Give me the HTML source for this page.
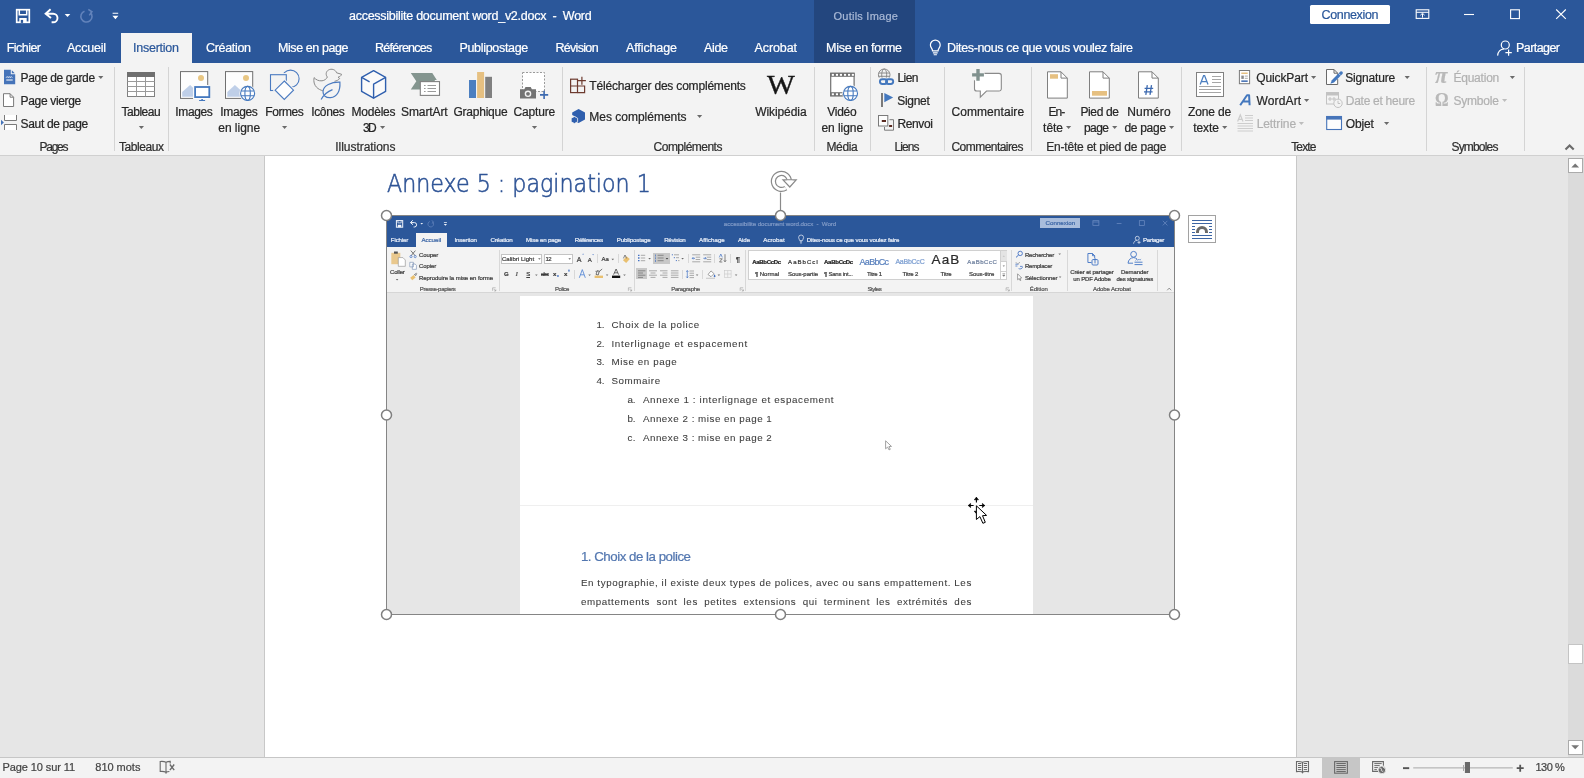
<!DOCTYPE html>
<html lang="fr">
<head>
<meta charset="utf-8">
<title>accessibilite document word_v2.docx - Word</title>
<style>
html,body{margin:0;padding:0;}
body{width:1584px;height:778px;overflow:hidden;position:relative;background:#e6e6e6;font-family:"Liberation Sans",sans-serif;}
.t{position:absolute;white-space:pre;line-height:1;z-index:5;-webkit-text-stroke:0.22px;}
.abs{position:absolute;}
#labels{position:absolute;left:0;top:0;width:1584px;height:778px;z-index:5;will-change:transform;}
#titlebar{position:absolute;left:0;top:0;width:1584px;height:63px;background:#2b579a;}
#ctx{position:absolute;left:814px;top:0;width:101px;height:63px;background:#23467e;}
#tab-active{position:absolute;left:121px;top:33px;width:71px;height:30px;background:#f3f3f3;}
#connexion{position:absolute;left:1310px;top:5px;width:80px;height:19px;background:#fff;border-radius:1.500px;}
#ribbon{position:absolute;left:0;top:63px;width:1584px;height:92px;background:#f3f3f3;border-bottom:1px solid #d0d0d0;}
.sep{position:absolute;top:67px;width:1px;height:84px;background:#d4d4d4;}
#doc{position:absolute;left:0;top:156px;width:1584px;height:601px;background:#e6e6e6;}
#page{position:absolute;left:264px;top:156px;width:1031px;height:601px;background:#fff;border-left:1px solid #c8c8c8;border-right:1px solid #c8c8c8;}
#vscroll{position:absolute;left:1568px;top:158px;width:16px;height:599px;background:#dbdbdb;}
.sbtn{position:absolute;left:0;width:13px;height:13px;background:#fff;border:1px solid #ababab;box-sizing:content-box;}
#status{position:absolute;left:0;top:757px;width:1584px;height:21px;background:#f3f3f3;border-top:1px solid #c6c6c6;box-sizing:border-box;}
#icons{position:absolute;left:0;top:0;z-index:4;}
#pic{position:absolute;left:387px;top:216px;width:787px;height:398px;overflow:hidden;background:#e6e6e6;}
#picframe{position:absolute;left:386px;top:215px;width:787px;height:398px;border:1px solid #858585;box-sizing:content-box;z-index:6;pointer-events:none;}
.h{position:absolute;width:8.6px;height:8.6px;border:1.5px solid #808080;border-radius:50%;background:#fff;z-index:7;}
</style>
</head>
<body>
<div id="titlebar"><div id="ctx"></div><div id="tab-active"></div><div id="connexion"></div></div>
<div id="ribbon"></div>
<div class="sep" style="left:114px"></div>
<div class="sep" style="left:168px"></div>
<div class="sep" style="left:562px"></div>
<div class="sep" style="left:814px"></div>
<div class="sep" style="left:870px"></div>
<div class="sep" style="left:944px"></div>
<div class="sep" style="left:1031px"></div>
<div class="sep" style="left:1181px"></div>
<div class="sep" style="left:1426px"></div>
<div class="sep" style="left:1524px"></div>
<div id="doc"></div>
<div id="page"></div>
<div id="vscroll">
  <div class="sbtn" style="top:0"></div>
  <div class="sbtn" style="top:486px;height:17.5px;border-color:#c4c4c4"></div>
  <div class="sbtn" style="top:582px"></div>
</div>
<div id="status"><div class="abs" style="left:1322px;top:0;width:38px;height:20px;background:#c6c6c6"></div></div>
<div id="pic">
<div class="abs" style="left:0.0px;top:0.0px;width:787.0px;height:31.3px;background:#2b579a;"></div>
<div class="abs" style="left:28.6px;top:16.8px;width:31.6px;height:14.7px;background:#f3f3f3;"></div>
<div class="abs" style="left:0.0px;top:31.3px;width:787.0px;height:45.1px;background:#f3f3f3;"></div>
<div class="abs" style="left:0.0px;top:76.4px;width:787.0px;height:0.8px;background:#d6d6d6;"></div>
<div class="abs" style="left:133.0px;top:79.6px;width:513.0px;height:318.4px;background:#ffffff;"></div>
<div class="abs" style="left:133.0px;top:289.3px;width:513.0px;height:0.9px;background:#efefef;"></div>
<div class="abs" style="left:653.2px;top:2.4px;width:39.6px;height:9.5px;background:#a9bddc;"></div>
<div class="abs" style="left:111.5px;top:33.5px;width:0.6px;height:41.5px;background:#d8d8d8;"></div>
<div class="abs" style="left:247.3px;top:33.5px;width:0.6px;height:41.5px;background:#d8d8d8;"></div>
<div class="abs" style="left:358.4px;top:33.5px;width:0.6px;height:41.5px;background:#d8d8d8;"></div>
<div class="abs" style="left:624.2px;top:33.5px;width:0.6px;height:41.5px;background:#d8d8d8;"></div>
<div class="abs" style="left:680.0px;top:33.5px;width:0.6px;height:41.5px;background:#d8d8d8;"></div>
<div class="abs" style="left:770.2px;top:33.5px;width:0.6px;height:41.5px;background:#d8d8d8;"></div>
<div class="abs" style="left:209.9px;top:38.0px;width:0.6px;height:9.0px;background:#d8d8d8;"></div>
<div class="abs" style="left:231.2px;top:38.0px;width:0.6px;height:9.0px;background:#d8d8d8;"></div>
<div class="abs" style="left:187.3px;top:54.0px;width:0.6px;height:9.0px;background:#d8d8d8;"></div>
<div class="abs" style="left:301.2px;top:38.0px;width:0.6px;height:9.0px;background:#d8d8d8;"></div>
<div class="abs" style="left:327.0px;top:38.0px;width:0.6px;height:9.0px;background:#d8d8d8;"></div>
<div class="abs" style="left:343.0px;top:38.0px;width:0.6px;height:9.0px;background:#d8d8d8;"></div>
<div class="abs" style="left:294.5px;top:54.0px;width:0.6px;height:9.0px;background:#d8d8d8;"></div>
<div class="abs" style="left:315.2px;top:54.0px;width:0.6px;height:9.0px;background:#d8d8d8;"></div>
<div class="abs" style="left:114.1px;top:37.5px;width:41.0px;height:10.5px;background:#fff;border:0.6px solid #c4c4c4;box-sizing:border-box;"></div>
<div class="abs" style="left:156.5px;top:37.5px;width:29.7px;height:10.5px;background:#fff;border:0.6px solid #c4c4c4;box-sizing:border-box;"></div>
<div class="abs" style="left:266.2px;top:37.0px;width:16.8px;height:11.0px;background:#c8c8c8;"></div>
<div class="abs" style="left:249.3px;top:52.3px;width:10.7px;height:11.0px;background:#c8c8c8;"></div>
<div class="abs" style="left:361.3px;top:34.4px;width:259.2px;height:29.8px;background:#fff;border:0.6px solid #d0d0d0;box-sizing:border-box;"></div>
<div class="abs" style="left:613.4px;top:34.8px;width:6.8px;height:10.6px;background:#e4e4e4;"></div>
<div class="abs" style="left:613.4px;top:45.4px;width:6.8px;height:0.5px;background:#d0d0d0;"></div>
<div class="abs" style="left:613.4px;top:54.5px;width:6.8px;height:0.5px;background:#d0d0d0;"></div>
<div class="abs" style="left:613.1px;top:34.8px;width:0.5px;height:29.2px;background:#d0d0d0;"></div>
<!--PICICONS-->
</div>
<div id="picframe"></div>
<svg class="abs" style="left:0;top:0;z-index:7" width="1584" height="778" viewBox="0 0 1584 778"><circle cx="386.5" cy="215.5" r="5" fill="#fff" stroke="#7f7f7f" stroke-width="1.500"/><circle cx="780.5" cy="215.5" r="5" fill="#fff" stroke="#7f7f7f" stroke-width="1.500"/><circle cx="1174.5" cy="215.5" r="5" fill="#fff" stroke="#7f7f7f" stroke-width="1.500"/><circle cx="386.5" cy="415" r="5" fill="#fff" stroke="#7f7f7f" stroke-width="1.500"/><circle cx="1174.5" cy="415" r="5" fill="#fff" stroke="#7f7f7f" stroke-width="1.500"/><circle cx="386.5" cy="614.5" r="5" fill="#fff" stroke="#7f7f7f" stroke-width="1.500"/><circle cx="780.5" cy="614.5" r="5" fill="#fff" stroke="#7f7f7f" stroke-width="1.500"/><circle cx="1174.5" cy="614.5" r="5" fill="#fff" stroke="#7f7f7f" stroke-width="1.500"/></svg>
<svg id="icons" width="1584" height="778" viewBox="0 0 1584 778" fill="none">
<!-- ===== title bar ===== -->
<g stroke="#fff" fill="none">
  <!-- save -->
  <rect x="16.700" y="9.700" width="12.600" height="12.600" stroke-width="1.700"/>
  <path d="M19.300 9.700v5h7.400v-5" stroke-width="1.500"/>
  <rect x="19.300" y="18" width="7.400" height="4.600" fill="#fff" stroke="none"/>
  <rect x="20.800" y="19.900" width="2.300" height="3" fill="#2b579a" stroke="none"/>
  <!-- undo -->
  <path d="M50.6 9.2l-5 4.6 5.4 4.3M46 13.7h7.2a4.3 4.3 0 0 1 0 8.6h-1.6" stroke-width="1.9" stroke-linejoin="miter"/>
  <!-- redo dim -->
  <path d="M84.5 11.2a5.6 5.6 0 1 0 5.8 1.2M88.3 9.4l3.6 2.4-2.6 3.6" stroke="#6283bb" stroke-width="1.6"/>
  <!-- window controls -->
  <rect x="1416.2" y="9.8" width="12.6" height="8.6" stroke-width="1.1"/>
  <path d="M1416.2 12.3h12.6M1422.5 17.6v-4M1420.4 15.2l2.1-2 2.1 2" stroke-width="1"/>
  <path d="M1464 14.5h10" stroke-width="1.1"/>
  <rect x="1510.6" y="9.8" width="8.8" height="8.8" stroke-width="1.1"/>
  <path d="M1556.2 9.5l9.6 9.4M1565.8 9.5l-9.6 9.4" stroke-width="1.1"/>
  <!-- bulb -->
  <path d="M932.5 50.800c0-2.200-2.100-3.200-2.100-5.800a4.900 4.900 0 0 1 9.800 0c0 2.600-2.100 3.600-2.100 5.800z" stroke-width="1.200"/>
  <path d="M932.900 52.900h4.800M933.700 54.800h3.200" stroke-width="1.100"/>
  <!-- share -->
  <circle cx="1505.3" cy="45" r="4" stroke-width="1.2"/>
  <path d="M1497.6 55.6c.4-4 3-6.4 6.4-6.6" stroke-width="1.2"/>
  <path d="M1508.6 49.4v6.4M1505.4 52.6h6.4" stroke-width="1.2"/>
</g>
<path d="M64.7 13.9h5.6l-2.8 3.2z" fill="#fff"/>
<path d="M112.6 12.7h5.6v1.1h-5.6zM112.4 15.7h6l-3 3.5z" fill="#fff"/>

<!-- ===== dropdown arrows ===== -->
<g fill="#6a6a6a">
<path d="M98.2 76h5.2l-2.6 3z"/><path d="M138.8 126h5.2l-2.6 3z"/><path d="M282 126h5.2l-2.6 3z"/><path d="M380 126h5.2l-2.6 3z"/>
<path d="M531.9 126h5.2l-2.6 3z"/><path d="M697 115.1h5.2l-2.6 3z"/><path d="M1066 126h5.2l-2.6 3z"/><path d="M1112.1 126h5.2l-2.6 3z"/>
<path d="M1169 126h5.2l-2.6 3z"/><path d="M1222.1 126h5.2l-2.6 3z"/><path d="M1311 76h5.2l-2.6 3z"/><path d="M1304 99h5.2l-2.6 3z"/>
<path d="M1404.6 76h5.2l-2.6 3z"/><path d="M1384 122h5.2l-2.6 3z"/><path d="M1509.8 76h5.2l-2.6 3z"/>
</g>
<g fill="#bdbdbd"><path d="M1298.8 122h5.2l-2.6 3z"/><path d="M1502 99h5.2l-2.6 3z"/></g>
<!-- collapse chevron -->
<path d="M1565.500 149.600l4.100-4.100 4.100 4.100" stroke="#6a6a6a" stroke-width="2.100"/>

<!-- ===== Pages group ===== -->
<!-- page de garde -->
<path d="M4 69.800h6.800v4.400h4.400v10h-11.200z" fill="#4674b9"/>
<path d="M11.800 70.200l3 3h-3z" fill="#4674b9"/>
<path d="M6.2 77.6l1-1 1 1 1-1 1 1 1-1 1 1M6.3 80h6.4" stroke="#fff" stroke-width="1"/>
<!-- page vierge -->
<path d="M3.5 93.7h6.6l3.5 3.5v9.3h-10.1z" fill="#fff" stroke="#7a7a7a" stroke-width="1"/>
<path d="M10.1 93.7v3.5h3.5" stroke="#7a7a7a" stroke-width="1"/>
<!-- saut de page -->
<path d="M4.5 115v5.5h12v-5.5M4.5 130v-5.5h12v5.5" stroke="#7a7a7a" stroke-width="1" fill="#fff"/>
<path d="M1 119.800l2.900 2.700-2.900 2.700z" fill="#4674b9"/>
<!-- tableau -->
<rect x="127.5" y="72.5" width="27" height="24" fill="#fff" stroke="#808080" stroke-width="1"/>
<rect x="127" y="72" width="28" height="5" fill="#6f6f6f"/>
<path d="M127.5 81.500h27M127.5 86.500h27M127.5 91.500h27M136.5 77v19.5M145.5 77v19.5" stroke="#9a9a9a" stroke-width="1"/>

<!-- ===== Illustrations ===== -->
<!-- images -->
<rect x="180.500" y="71.600" width="27.200" height="26.800" fill="#fdfdfd" stroke="#707070" stroke-width="1"/>
<circle cx="201" cy="77.900" r="3" fill="#e8c683"/>
<path d="M182.200 96.700v-4.600l7.900-7.100 6 5.400v6.300z" fill="#bfcfe8"/>
<rect x="193.200" y="85.100" width="18" height="17" fill="#f3f3f3"/>
<rect x="193.200" y="85.100" width="15" height="13.800" fill="#fdfdfd"/>
<rect x="195.100" y="87" width="14.200" height="10.100" fill="#fff" stroke="#4478be" stroke-width="1.800"/>
<path d="M199.100 100.500h6M201.300 99.600h1.600" stroke="#4478be" stroke-width="1.100"/>
<!-- images en ligne -->
<rect x="225.500" y="71.600" width="27.200" height="26.800" fill="#fdfdfd" stroke="#707070" stroke-width="1"/>
<circle cx="246" cy="77.900" r="3" fill="#e8c683"/>
<path d="M227.300 96.700v-4.600l7.600-7.100 8 7.200v4.500z" fill="#bfcfe8"/>
<circle cx="247.6" cy="93.4" r="8.300" fill="#f3f3f3"/>
<g stroke="#4478be" stroke-width="1.100">
<circle cx="247.6" cy="93.4" r="7" fill="#fff"/>
<ellipse cx="247.6" cy="93.4" rx="2.700" ry="7"/>
<path d="M241.0 91.0h13.200M241.0 95.8h13.200"/>
</g>
<!-- formes -->
<g stroke="#f3f3f3" stroke-width="3.200" fill="#f3f3f3">
<circle cx="290.500" cy="78.700" r="8.600"/>
</g>
<circle cx="290.500" cy="78.700" r="8.600" stroke="#4a7ac0" stroke-width="1.100" fill="#f3f3f3"/>
<rect x="270.500" y="74.700" width="15.800" height="15.800" fill="#f3f3f3" stroke="#f3f3f3" stroke-width="3.200"/>
<rect x="270.500" y="74.700" width="15.800" height="15.800" fill="#f3f3f3" stroke="#4a7ac0" stroke-width="1.100"/>
<path d="M284.300 81l9.200 9.200-9.200 9.200-9.200-9.200z" fill="#f3f3f3" stroke="#f3f3f3" stroke-width="3.200"/>
<path d="M284.300 81l9.200 9.200-9.200 9.200-9.200-9.200z" fill="#fdfdfd" stroke="#4a7ac0" stroke-width="1.100"/>
<!-- icones (duck + leaf) -->
<path d="M327.400 77C325.500 75 325.800 71.500 328.500 70C331.500 68.300 335.500 69.500 336.600 72.800L341.600 74.300C341 76 339.500 77 338 77.200L339.600 78.600C338.600 80 336.500 81 334.500 81.300M327.400 77C326.500 79 324.500 80.500 322 80.800C318.800 81.200 316 79.800 314.100 77.600C313.300 81.500 314.300 85 316.600 87.300C318.300 89 320.500 90.200 322.800 90.700" stroke="#8a8a8a" stroke-width="1"/>
<path d="M339.900 82.200C331 82 323.500 85.500 323 91.500C322.800 95.500 326 98 330.500 97.600C337 97 340.500 91 339.900 82.200ZM321.100 99.500C323.500 95 327.500 91.500 332.500 89.600" stroke="#4a7ac0" stroke-width="1.200"/>
<!-- modeles 3D -->
<path d="M373.600 70.600l12 6.800v14l-12 6.800-12-6.800v-14z" fill="#fafafa" stroke="#2f5fae" stroke-width="1.400" stroke-linejoin="round"/><path d="M385.600 77.400l-12 6.800v14M369.600 81.900l-8-4.500" stroke="#2f5fae" stroke-width="1.400" stroke-linejoin="round"/>
<!-- smartart -->
<path d="M410.800 73h21.500l4.500 7-2 0v9.500h-24l5.500-8.200z" fill="#84958f"/>
<rect x="420.300" y="81.600" width="19.200" height="13.800" fill="#fff" stroke="#808080" stroke-width="1.100"/>
<path d="M424 85.500h1.600M424 88.500h1.600M424 91.500h1.600M427.500 85.500h8.500M427.500 88.500h8.500M427.500 91.500h8.500" stroke="#9a9a9a" stroke-width="1"/>
<!-- graphique -->
<rect x="469" y="80" width="7" height="18" fill="#4c7fc0"/>
<rect x="477.100" y="72" width="7" height="26" fill="#e6c081"/>
<rect x="485.200" y="76.800" width="6.800" height="21.200" fill="#808080"/>
<!-- capture -->
<rect x="522.500" y="72.500" width="22" height="19" fill="#fff" stroke="#9a9a9a" stroke-width="1" stroke-dasharray="2 1.500"/>
<path d="M520 89.200h4.300l1.200-2.200h5.200l1.200 2.200h4.100v9.400h-16z" fill="#737373"/>
<circle cx="528" cy="93.800" r="3.300" fill="#f3f3f3"/><circle cx="528" cy="93.800" r="1.900" fill="#737373"/>
<path d="M544.100 90.800v8.200M540 94.900h8.200" stroke="#3d6ab0" stroke-width="1.600"/>

<!-- ===== Complements ===== -->
<g stroke="#6d3b2f" stroke-width="1.200">
<rect x="570.600" y="79.200" width="6.900" height="13.400"/>
<path d="M570.600 86h14v6.600h-7.100M581.900 76.700v8M578 80.700h7.900"/>
</g>
<!-- mes complements -->
<path d="M578.600 109l6.400 3.400v7.200l-6.400 3.400-3-1.600v-4.600l-3.400-1.800v-2.600z" fill="#2f5fae"/>
<path d="M574.400 116.500l3.200 1.700v3.600l-3.200 1.700-3.200-1.700v-3.600z" fill="#2f5fae" stroke="#f3f3f3" stroke-width="0.800"/>
<!-- ===== media: video ===== -->
<rect x="830.700" y="73.300" width="23.400" height="22.500" fill="#fff" stroke="#707070" stroke-width="1.200"/>
<rect x="830.200" y="72.800" width="24.400" height="4" fill="#707070"/>
<rect x="830.200" y="92.200" width="24.400" height="4.100" fill="#707070"/>
<rect x="831.8" y="73.900" width="2.100" height="1.900" fill="#fff"/><rect x="835.9" y="73.900" width="2.100" height="1.900" fill="#fff"/><rect x="839.9" y="73.900" width="2.100" height="1.900" fill="#fff"/><rect x="844.0" y="73.900" width="2.100" height="1.900" fill="#fff"/><rect x="848.0" y="73.900" width="2.100" height="1.900" fill="#fff"/><rect x="851.8" y="73.900" width="2.100" height="1.900" fill="#fff"/><rect x="831.8" y="93.300" width="2.100" height="1.900" fill="#fff"/><rect x="835.9" y="93.300" width="2.100" height="1.900" fill="#fff"/><rect x="839.9" y="93.300" width="2.100" height="1.900" fill="#fff"/>
<circle cx="850.5" cy="93.4" r="8.300" fill="#f3f3f3"/>
<g stroke="#4478be" stroke-width="1.100">
<circle cx="850.5" cy="93.4" r="7" fill="#fff"/>
<ellipse cx="850.5" cy="93.4" rx="2.700" ry="7"/>
<path d="M843.9 91.0h13.200M843.9 95.8h13.200"/>
</g>
<!-- ===== liens ===== -->
<g stroke="#8a8a8a" stroke-width="1">
<circle cx="884.200" cy="74.800" r="5.800"/>
<ellipse cx="884.200" cy="74.800" rx="2.500" ry="5.800"/>
<path d="M878.800 73h10.800M878.800 76.300h10.800"/>
</g>
<rect x="877.400" y="77.600" width="18" height="8.400" fill="#f3f3f3"/>
<g stroke="#4478be" stroke-width="1.900">
<rect x="879.900" y="79.200" width="7.200" height="4.800" rx="2.400"/>
<rect x="886" y="79.200" width="7.200" height="4.800" rx="2.400"/>
</g>
<path d="M882 93v14" stroke="#7a7a7a" stroke-width="2"/>
<path d="M884.300 93l8.900 4.600-8.900 4.700z" fill="#4478be"/>
<rect x="878.500" y="115.500" width="9.300" height="10.500" fill="#fdfdfd" stroke="#7a7a7a" stroke-width="1"/>
<path d="M884.500 127v3.200h9v-10.500h-4" stroke="#7a7a7a" stroke-width="1"/>
<path d="M881.800 121h4.200M889.100 126h3" stroke="#5a2a20" stroke-width="1.900"/>
<!-- ===== commentaire ===== -->
<path d="M984.500 73.400h14.500a2.300 2.300 0 0 1 2.300 2.300v13a2.300 2.300 0 0 1-2.300 2.300h-12.500l-6.200 6.200v-6.200h-3.500a2.300 2.300 0 0 1-2.300-2.300v-8.500" fill="#fff" stroke="#8a8a8a" stroke-width="1.100"/>
<path d="M978 69v11.800M972.100 74.900h11.800" stroke="#80918e" stroke-width="3.400"/>
<!-- ===== header/footer/page number ===== -->
<g fill="#fff" stroke="#7f7f7f" stroke-width="1">
<path d="M1047.500 71.800h13.500l6.300 6.300v20h-19.800z"/><path d="M1061 71.800v6.300h6.300" fill="none"/>
<path d="M1089.500 71.800h13.500l6.300 6.300v20h-19.800z"/><path d="M1103 71.800v6.300h6.300" fill="none"/>
<path d="M1138.500 71.800h13.500l6.300 6.300v20h-19.800z"/><path d="M1152 71.800v6.300h6.300" fill="none"/>
</g>
<rect x="1050" y="74.200" width="8" height="4.500" fill="#e6c081"/>
<rect x="1092" y="91" width="15" height="4.700" fill="#e6c081"/>
<path d="M1147.300 85.200l-1.500 9.600M1151.500 85.200l-1.500 9.600M1144.600 88.300h8.600M1144 91.800h8.600" stroke="#3d6ab0" stroke-width="1.300"/>
<!-- ===== texte ===== -->
<rect x="1196.500" y="72.500" width="27" height="24" fill="#fff" stroke="#808080" stroke-width="1"/>
<path d="M1212 76.500h9M1212 79.500h9M1212 82.500h9M1199 86.500h22M1199 89.500h22M1199 92.500h22" stroke="#a6a6a6" stroke-width="1"/>
<path d="M1200.200 84.600l3.400-9h1l3.400 9M1201.500 81.600h5.200" stroke="#4c7fc0" stroke-width="1.300"/>
<!-- quickpart -->
<rect x="1239.400" y="70.500" width="10.200" height="13.200" fill="#fff" stroke="#7a7a7a" stroke-width="1"/>
<rect x="1241.300" y="72.500" width="6.400" height="1.500" fill="#e6c081"/>
<rect x="1241.300" y="75.600" width="2.500" height="3.300" fill="#8a8a8a"/>
<path d="M1244.800 76.100h3M1244.800 78.300h3" stroke="#a0a0a0" stroke-width="0.900"/>
<rect x="1241.300" y="80.400" width="6.400" height="1.500" fill="#3d6ab0"/>
<!-- wordart -->
<path d="M1240.200 105.200l6.800-10h2.100l.5 10M1242.800 101.500h6.400" stroke="#4478be" stroke-width="2" stroke-linejoin="round"/>
<!-- lettrine (disabled) -->
<g stroke="#cdcdcd" stroke-width="1">
<path d="M1237.600 121.500l2.700-6.600 2.700 6.600M1238.500 119.300h3.600" stroke-width="1.200"/>
<path d="M1245 115.500h8M1245 118h8M1245 120.500h8M1237.500 123.500h15.500M1237.500 126h15.500M1237.500 128.500h15.500M1237.500 131h15.500"/>
</g>
<!-- signature -->
<path d="M1334 69.500h-7.500v15h11.200v-5.400M1334 69.500l3.700 3.700v1.600M1334 69.500v3.700h3.700" stroke="#6a6a6a" stroke-width="1" fill="#fdfdfd"/>
<path d="M1340.400 71.600a1.600 1.600 0 0 1 2.200 2.200l-8.600 8.600-3.600 1.400 1.400-3.600z" fill="#4478be"/>
<path d="M1338.600 73.400l2.200 2.200" stroke="#f3f3f3" stroke-width="0.700"/>
<!-- date et heure (disabled) -->
<g stroke="#c2c2c2" stroke-width="1" fill="none">
<rect x="1326.500" y="93" width="12" height="11"/>
<rect x="1326.500" y="92.600" width="12" height="2.400" fill="#c2c2c2"/>
<path d="M1329 98h2v2h-2zM1333 98h2v2h-2z"/>
<circle cx="1338" cy="103.300" r="4.200" fill="#f3f3f3"/>
<path d="M1338 100.800v2.700h2.200"/>
</g>
<!-- objet -->
<rect x="1326.700" y="116.500" width="14.800" height="13" fill="#fdfdfd" stroke="#4674b9" stroke-width="1.100"/>
<rect x="1326.200" y="116" width="15.800" height="3.600" fill="#4674b9"/>
<!-- ===== symboles (disabled): text glyphs in labels ===== -->
<!-- ===== status bar ===== -->
<g stroke="#6a6a6a" stroke-width="1" fill="none">
<!-- proofing book -->
<path d="M166 772.200v-10c-1.700-.800-3.700-.900-5.800-.700v10c2.100-.200 4.100-.100 5.800.700zM166 762.200c1.300-.600 2.700-.800 4.200-.800v2M166 772.200c1.100-.500 2.200-.700 3.400-.700" stroke-width="1.100"/>
<path d="M166 772v1.800" stroke-width="1"/>
<path d="M169.900 764.500l4.300 5.600M174.200 764.500l-4.300 5.600" stroke-width="1.400"/>
<!-- read mode -->
<path d="M1302.500 762.200v9.600M1302.500 762.200c-1.800-.700-3.800-.700-6-.600v10c2.200-.100 4.200-.100 6 .200c1.800-.300 3.800-.300 6-.200v-10c-2.200-.100-4.200-.100-6 .600z" stroke-width="1.100"/>
<path d="M1298 763.500h3.300M1298 765.500h3.300M1298 767.500h3.300M1298 769.600h3.300M1303.800 763.500h3.300M1303.800 765.500h3.300M1303.800 767.500h3.300M1303.800 769.600h3.300" stroke-width="1"/>
<path d="M1301.200 771.800l1.300 2 1.300-2z" fill="#6a6a6a" stroke="none"/>
<!-- print layout -->
<rect x="1334.600" y="761.600" width="12.800" height="11.600" stroke-width="1.100"/>
<path d="M1336.400 763.500h9.400M1336.400 765.500h9.400M1336.400 767.500h9.400M1336.400 769.600h9.400M1336.400 771.500h9.400" stroke-width="1"/>
<!-- web layout -->
<path d="M1378 771.400h-5.400v-9.800h10.800v4.200" stroke-width="1.100"/>
<path d="M1374.300 763.600h7.400M1374.300 765.600h5.400M1374.300 767.600h3.600M1374.300 769.600h2.600" stroke-width="1"/>
<circle cx="1381.900" cy="769.900" r="3.800" fill="#6a6a6a" stroke="#f3f3f3" stroke-width="0.800"/>
<path d="M1379.600 768.400c1.400-.600 2.200.400 1.800 1.500s.900 1.800 1.900 1.100M1382.800 767c.600.700 1.500.600 2 1.300" stroke="#f3f3f3" stroke-width="0.900"/>
</g>
<!-- zoom slider -->
<rect x="1403" y="767.200" width="6.200" height="1.900" fill="#555"/>
<rect x="1413.200" y="767.400" width="99.600" height="1" fill="#a8a8a8"/>
<rect x="1463" y="765" width="1" height="6" fill="#a8a8a8"/>
<rect x="1464.900" y="762" width="5.100" height="11" fill="#6a6a6a"/>
<path d="M1516.700 768.200h7M1520.200 764.700v7" stroke="#555" stroke-width="1.800"/>
<!-- scrollbar arrows -->
<path d="M1571.300 167.500l3.900-3.900 3.900 3.900z" fill="#777"/>
<path d="M1571.300 745.300l3.900 3.900 3.900-3.900z" fill="#777"/>
<!-- ===== picture tools: rotate handle ===== -->
<path d="M780.500 192.500v18" stroke="#8a8a8a" stroke-width="1.200"/>
<path d="M789.400 181.200a8 8 0 1 0-3.600 6.900" stroke="#8a8a8a" stroke-width="5.200" />
<path d="M789.400 181.200a8 8 0 1 0-3.600 6.900" stroke="#fff" stroke-width="2.800" />
<path d="M783 179.800h13.200l-6.400 7.200z" fill="#fff" stroke="#8a8a8a" stroke-width="1.200" stroke-linejoin="miter"/>
<path d="M786.300 180.600h6.500l-3.200 3.300z" fill="#fff"/>
<!-- layout options button -->
<rect x="1188.500" y="215.500" width="27" height="27" fill="#fff" stroke="#a2a2a2" stroke-width="1"/>
<path d="M1192 220.500h20M1192 223.500h20M1192 226.500h3M1209 226.500h3M1192 229.500h3M1209 229.500h3M1192 232.500h3M1209 232.500h3M1192 235.500h20M1192 238.500h20" stroke="#3c65a4" stroke-width="1.100"/>
<path d="M1196 233v-1.100a6 6 0 0 1 12 0v1.100h-3v-1.100a3 3 0 0 0-6 0v1.100z" fill="#6a6a6a"/>
<!-- cursors -->
<path d="M885.600 440.800v8l2-1.700 1.400 2.800 1.300-.600-1.400-2.700 2.600-.200z" fill="#fff" stroke="#8a8a8a" stroke-width="0.800"/>
<g stroke="#000" stroke-width="1.100" fill="#000">
<path d="M976.400 497.600V502.600M968.600 505.500H973.600M979.300 505.500H984.600" fill="none"/>
<path d="M974.300 499.800L976.400 497.200L978.500 499.800zM970.600 503.400L968.200 505.500L970.600 507.600zM982.400 503.400L984.800 505.500L982.400 507.600zM974.200 511.200h2v2.200z" stroke-width="0.600"/>
</g>
<path d="M976.400 505.800V519.500L979.900 516.600L982.900 523.300L985.300 522.300L982.500 515.700L986.600 515.400Z" fill="#fff" stroke="#000" stroke-width="1" stroke-linejoin="miter"/>
<!-- ===== inner picture icons ===== -->
<g stroke="#f0f4fb" fill="none" stroke-width="0.800">
<rect x="396.400" y="220.600" width="6.300" height="6.600" stroke-width="1"/><path d="M397.900 220.600v2.300h3.300v-2.300" stroke-width="0.700"/><rect x="397.800" y="224.800" width="3.500" height="2.400" fill="#f0f4fb" stroke="none"/>
<path d="M412.800 220.300l-2.400 2.300 2.600 2.100M410.800 222.600h3.600a2.200 2.200 0 0 1 0 4.400h-.800" stroke-width="1"/>
<path d="M799.700 240.600c0-1.200-1.100-1.700-1.100-3.100a2.500 2.500 0 0 1 5 0c0 1.400-1.100 1.900-1.100 3.100zM799.900 241.800h2.200M800.200 243h1.600" stroke-width="0.700"/>
<circle cx="1137.300" cy="238.300" r="2" stroke-width="0.700"/><path d="M1133.600 243.700c.2-2 1.500-3.200 3.200-3.300M1139 240.700v3.200M1137.400 242.300h3.200" stroke-width="0.700"/>
</g>
<path d="M420.400 223h2.700l-1.350 1.600z" fill="#f0f4fb"/><path d="M443.900 222.300h3v.600h-3zM443.800 223.900h3.200l-1.600 1.800z" fill="#f0f4fb"/>
<path d="M429.800 221.500a2.800 2.800 0 1 0 2.900.600M431.700 220.600l1.800 1.200-1.300 1.800" stroke="#6283bb" stroke-width="0.800" fill="none"/>
<g stroke="#6f8ec4" fill="none" stroke-width="0.700"><rect x="1092.900" y="220.700" width="6" height="4.600"/><path d="M1092.900 222h6M1116.700 223.500h4.800"/><rect x="1139.300" y="220.700" width="5" height="4.800"/><path d="M1162.800 220.800l4.600 4.600M1167.400 220.800l-4.600 4.600"/></g>
<rect x="391.300" y="252.800" width="9" height="11.400" fill="#e9c88d"/><rect x="394" y="251.500" width="3.800" height="2.200" fill="#555"/>
<path d="M398.300 257.600h4.600l2.400 2.400v6.300h-7z" fill="#fff" stroke="#8a8a8a" stroke-width="0.600"/>
<path d="M395.8 278.9h2.6l-1.3 1.500z" fill="#666"/>
<path d="M410.800 250.600l4.400 5.200M415.400 250.600l-4.400 5.200" stroke="#555" stroke-width="0.800"/><circle cx="411" cy="256.600" r="1.100" stroke="#4472c4" stroke-width="0.700"/><circle cx="415.200" cy="256.600" r="1.100" stroke="#4472c4" stroke-width="0.700"/>
<path d="M409.800 262.300h3.600v4.600h-3.600zM412.300 264h2.800l1.300 1.300v4h-4.100z" fill="#fff" stroke="#6f86ad" stroke-width="0.600"/>
<path d="M410.200 277.800l3.400-2.800 2 2.400-3.400 2.800z" fill="#e9c070"/><path d="M414 275l2.400-1.800M415.400 276l1.400-2.600" stroke="#555" stroke-width="0.700"/>
<path d="M492.6 290.8v-3h3M493.8 289.0l2 2M495.8 289.4v1.600h-1.600" stroke="#8a8a8a" stroke-width="0.500" fill="none"/>
<path d="M628.4 290.8v-3h3M629.6 289.0l2 2M631.6 289.4v1.600h-1.600" stroke="#8a8a8a" stroke-width="0.500" fill="none"/>
<path d="M740.2 290.8v-3h3M741.4 289.0l2 2M743.4 289.4v1.600h-1.600" stroke="#8a8a8a" stroke-width="0.500" fill="none"/>
<path d="M1006.1 290.8v-3h3M1007.3 289.0l2 2M1009.3 289.4v1.600h-1.600" stroke="#8a8a8a" stroke-width="0.500" fill="none"/>
<path d="M538.1 258.3h2.6l-1.3 1.500z" fill="#666"/>
<path d="M568.4 258.3h2.6l-1.3 1.500z" fill="#666"/>
<path d="M582.200 254.600l.9-1 .9 1zM592.200 254.200l.9 1 .9-1z" fill="#4472c4"/>
<path d="M611.5 258.7h2.6l-1.3 1.500z" fill="#666"/>
<path d="M623 260.300l3.600-4 3.200 2.600-3.600 4z" fill="#e9c070"/><path d="M623.400 258.400l1.600-3.400 1.600 3.400" stroke="#555" stroke-width="0.700" fill="none"/>
<path d="M535.1 274.5h2.6l-1.3 1.500z" fill="#777"/>
<path d="M588.3 274.5h2.6l-1.3 1.500z" fill="#777"/>
<path d="M605.8 274.5h2.6l-1.3 1.500z" fill="#777"/>
<path d="M623.2 274.5h2.6l-1.3 1.500z" fill="#777"/>
<rect x="557.300" y="275" width="1.300" height="2" fill="#4472c4"/><rect x="568.300" y="269.600" width="1.300" height="2" fill="#4472c4"/>
<path d="M579.300 277.800l3-8.200 3 8.200M580.600 274.800h3.400" stroke="#5b8bd6" stroke-width="0.900" fill="none"/>
<rect x="594.600" y="275.600" width="8.400" height="2.400" fill="#e9c070"/><path d="M596 274.400l1.300-3.800 2 .600-1.100 3.800zM598.600 272l3.600-3" stroke="#555" stroke-width="0.800" fill="none"/><path d="M595.300 271.300h2.400" stroke="#555" stroke-width="0.600"/>
<rect x="612" y="275.600" width="8.200" height="2.400" fill="#111"/><path d="M613.600 274.600l2.500-5.600 2.500 5.600M614.600 272.800h3" stroke="#444" stroke-width="0.800" fill="none"/>
<path d="M638 255.300h1.500M638 258h1.500M638 260.700h1.500" stroke="#4472c4" stroke-width="1.300"/><path d="M640.8 255.3H645.2M640.8 258.0H645.2M640.8 260.7H645.2" stroke="#8a8a8a" stroke-width="0.7"/>
<path d="M648.3 257.9h2.6l-1.3 1.500z" fill="#666"/>
<path d="M655.500 254.500v2M655.500 257.300v2M655.500 260v2" stroke="#4472c4" stroke-width="0.700"/><path d="M657.6 255.3H663.6M657.6 258.0H663.6M657.6 260.7H663.6" stroke="#6a6a6a" stroke-width="0.7"/>
<path d="M665.7 257.9h2.6l-1.3 1.500z" fill="#444"/>
<path d="M671.800 254.800h1.200M673.800 257.700h1.200M675.800 260.600h1.200" stroke="#4472c4" stroke-width="0.900"/><path d="M674.0 254.8H679.0" stroke="#8a8a8a" stroke-width="0.7"/><path d="M676.0 257.7H679.0" stroke="#8a8a8a" stroke-width="0.7"/><path d="M678.0 260.6H679.5" stroke="#8a8a8a" stroke-width="0.7"/>
<path d="M681.3 257.9h2.6l-1.3 1.500z" fill="#666"/>
<path d="M692.2 254.8H700.2M692.2 261.8H700.2" stroke="#8a8a8a" stroke-width="0.7"/><path d="M695.7 257.2H700.2M695.7 259.5H700.2" stroke="#8a8a8a" stroke-width="0.7"/>
<path d="M703.2 254.8H711.2M703.2 261.8H711.2" stroke="#8a8a8a" stroke-width="0.7"/><path d="M706.7 257.2H711.2M706.7 259.5H711.2" stroke="#8a8a8a" stroke-width="0.7"/>
<path d="M695 258.300h-2.600M693.300 257.200l-1.100 1.100 1.100 1.100M703.400 258.300h2.600M705.100 257.200l1.100 1.100-1.100 1.100" stroke="#4472c4" stroke-width="0.800" fill="none"/>
<path d="M719.300 257.400l1.500-3.400 1.500 3.400" stroke="#4472c4" stroke-width="0.700" fill="none"/><path d="M719.500 258.800h2.800l-2.800 3.200h2.800" stroke="#555" stroke-width="0.700" fill="none"/><path d="M725 254.200v7.400M723.800 260.300l1.200 1.500 1.200-1.500" stroke="#555" stroke-width="0.700" fill="none"/>
<path d="M638.0 270.8H645.4M638.0 275.2H645.4" stroke="#6a6a6a" stroke-width="0.7"/><path d="M638.0 273.0H643.0M638.0 277.4H643.0" stroke="#6a6a6a" stroke-width="0.7"/>
<path d="M649.0 270.8H657.0M649.0 275.2H657.0" stroke="#8a8a8a" stroke-width="0.7"/><path d="M650.5 273.0H655.5M650.5 277.4H655.5" stroke="#8a8a8a" stroke-width="0.7"/>
<path d="M660.0 270.8H667.5M660.0 275.2H667.5" stroke="#8a8a8a" stroke-width="0.7"/><path d="M662.5 273.0H667.5M662.5 277.4H667.5" stroke="#8a8a8a" stroke-width="0.7"/>
<path d="M670.9 270.8H678.5M670.9 273.0H678.5M670.9 275.2H678.5M670.9 277.4H678.5" stroke="#8a8a8a" stroke-width="0.7"/>
<path d="M687.300 270.600v7.200M686.300 271.800l1-1.300 1 1.300M686.300 276.600l1 1.300 1-1.300" stroke="#4472c4" stroke-width="0.700" fill="none"/><path d="M689.5 271.0H694.0M689.5 273.2H694.0M689.5 275.4H694.0M689.5 277.6H694.0" stroke="#8a8a8a" stroke-width="0.7"/>
<path d="M695.8 274.5h2.6l-1.3 1.500z" fill="#777"/>
<path d="M708 274.500l3-3.600 3 2.800-3 3z" fill="#fff" stroke="#666" stroke-width="0.600"/><path d="M714.600 274.300c.6.900.9 1.500.9 2a.9.900 0 0 1-1.800 0c0-.5.300-1.100.9-2z" fill="#4472c4"/><rect x="706" y="277.700" width="9" height="1.300" fill="#d0d0d0"/>
<path d="M717.6 274.5h2.6l-1.3 1.500z" fill="#777"/>
<rect x="724.300" y="270.600" width="6.800" height="6.800" stroke="#c8c8c8" stroke-width="0.600" fill="none"/><path d="M727.700 270.600v6.800M724.300 274h6.800" stroke="#c8c8c8" stroke-width="0.600"/>
<path d="M734.8 274.5h2.6l-1.3 1.500z" fill="#777"/>
<path d="M1002.600 256.800l1.200-1.400 1.200 1.400z" fill="#c0c0c0"/><path d="M1002.600 265.400l1.200 1.400 1.200-1.400z" fill="#777"/><path d="M1002.400 273.600h2.800M1002.600 275l1.200 1.400 1.200-1.400z" fill="#777" stroke="#777" stroke-width="0.500"/>
<circle cx="1020.200" cy="253.400" r="2.200" stroke="#4472c4" stroke-width="0.900" fill="none"/><path d="M1018.600 255l-2.600 2.400" stroke="#4472c4" stroke-width="1"/>
<path d="M1015.400 264.200h3.200M1015.400 266h2M1018.600 268.600c1.600.8 3.400.2 4-1.400M1020 266.400h2.600" stroke="#4472c4" stroke-width="0.800" fill="none"/><path d="M1016 262.400l1.200 1.200M1019.600 262.200l-1 1.400" stroke="#555" stroke-width="0.600"/>
<path d="M1017.600 273.800v6l1.500-1.200 1 2 .8-.4-1-2 1.800-.2z" fill="#fff" stroke="#666" stroke-width="0.600"/>
<path d="M1058.4 253.6h2.6l-1.3 1.500z" fill="#777"/>
<path d="M1058.8 276.6h2.6l-1.3 1.500z" fill="#777"/>
<g stroke="#3f73c4" stroke-width="0.900" fill="none"><path d="M1091.500 262.500h-3.600v-9h4.600l2.200 2.200v2.300M1092.500 253.500v2.200h2.200"/><rect x="1092" y="259.600" width="6" height="5.400" rx="1"/><path d="M1095 263.400v-4.600M1093.600 260l1.400-1.400 1.400 1.400"/></g>
<g stroke="#3f73c4" stroke-width="0.900" fill="none"><circle cx="1133.600" cy="254.300" r="2.900"/><path d="M1128 263.200c.4-3.400 2.400-5.400 5.600-5.600 1.600.1 2.800.7 3.600 1.600M1128 263.200h5M1134.500 262.200h8M1134.500 264.600h8"/><path d="M1135.500 260.600l1.200-1.400 1 1.200 1.200-1.400 1 1.200 1.200-1.200" stroke-width="0.600"/></g>
<path d="M1167.200 290.300l2-2.200 2 2.200" stroke="#777" stroke-width="0.800" fill="none"/>
</svg>
<div id="labels"><span class="t" style="left:349.0px;top:10.0px;font-size:12.5px;color:#ffffff;letter-spacing:-0.264px;">accessibilite document word_v2.docx  -  Word</span>
<span class="t" style="left:833.5px;top:11.0px;font-size:11px;color:#a9b9d6;letter-spacing:0.241px;">Outils Image</span>
<span class="t" style="left:1321.5px;top:9.0px;font-size:12.5px;color:#2b579a;letter-spacing:-0.346px;">Connexion</span>
<span class="t" style="left:6.7px;top:42.0px;font-size:12.5px;color:#ffffff;letter-spacing:-0.536px;">Fichier</span>
<span class="t" style="left:67.0px;top:42.0px;font-size:12.5px;color:#ffffff;letter-spacing:-0.216px;">Accueil</span>
<span class="t" style="left:206.0px;top:42.0px;font-size:12.5px;color:#ffffff;letter-spacing:-0.321px;">Création</span>
<span class="t" style="left:278.0px;top:42.0px;font-size:12.5px;color:#ffffff;letter-spacing:-0.415px;">Mise en page</span>
<span class="t" style="left:375.0px;top:42.0px;font-size:12.5px;color:#ffffff;letter-spacing:-0.737px;">Références</span>
<span class="t" style="left:459.4px;top:42.0px;font-size:12.5px;color:#ffffff;letter-spacing:-0.307px;">Publipostage</span>
<span class="t" style="left:555.4px;top:42.0px;font-size:12.5px;color:#ffffff;letter-spacing:-0.677px;">Révision</span>
<span class="t" style="left:626.0px;top:42.0px;font-size:12.5px;color:#ffffff;letter-spacing:-0.113px;">Affichage</span>
<span class="t" style="left:704.0px;top:42.0px;font-size:12.5px;color:#ffffff;letter-spacing:-0.344px;">Aide</span>
<span class="t" style="left:754.5px;top:42.0px;font-size:12.5px;color:#ffffff;letter-spacing:-0.099px;">Acrobat</span>
<span class="t" style="left:826.0px;top:42.0px;font-size:12.5px;color:#ffffff;letter-spacing:-0.267px;">Mise en forme</span>
<span class="t" style="left:947.0px;top:42.0px;font-size:12.5px;color:#ffffff;letter-spacing:-0.354px;">Dites-nous ce que vous voulez faire</span>
<span class="t" style="left:1516.0px;top:42.0px;font-size:12.5px;color:#ffffff;letter-spacing:-0.565px;">Partager</span>
<span class="t" style="left:133.0px;top:42.0px;font-size:12.5px;color:#2b579a;letter-spacing:-0.244px;">Insertion</span>
<span class="t" style="left:20.6px;top:72.0px;font-size:12px;color:#262626;letter-spacing:-0.353px;">Page de garde</span>
<span class="t" style="left:20.6px;top:95.0px;font-size:12px;color:#262626;letter-spacing:-0.345px;">Page vierge</span>
<span class="t" style="left:20.6px;top:118.0px;font-size:12px;color:#262626;letter-spacing:-0.346px;">Saut de page</span>
<span class="t" style="left:39.5px;top:141.0px;font-size:12px;color:#2e2e2e;letter-spacing:-1.258px;">Pages</span>
<span class="t" style="left:121.5px;top:106.0px;font-size:12px;color:#262626;letter-spacing:-0.474px;">Tableau</span>
<span class="t" style="left:118.9px;top:141.0px;font-size:12px;color:#2e2e2e;letter-spacing:-0.435px;">Tableaux</span>
<span class="t" style="left:175.3px;top:106.0px;font-size:12px;color:#262626;letter-spacing:-0.372px;">Images</span>
<span class="t" style="left:220.3px;top:106.0px;font-size:12px;color:#262626;letter-spacing:-0.372px;">Images</span>
<span class="t" style="left:218.3px;top:122.0px;font-size:12px;color:#262626;letter-spacing:-0.035px;">en ligne</span>
<span class="t" style="left:265.3px;top:106.0px;font-size:12px;color:#262626;letter-spacing:-0.434px;">Formes</span>
<span class="t" style="left:311.3px;top:106.0px;font-size:12px;color:#262626;letter-spacing:-0.392px;">Icônes</span>
<span class="t" style="left:351.6px;top:106.0px;font-size:12px;color:#262626;letter-spacing:-0.243px;">Modèles</span>
<span class="t" style="left:363.1px;top:122.0px;font-size:12px;color:#262626;letter-spacing:-1.844px;">3D</span>
<span class="t" style="left:401.0px;top:106.0px;font-size:12px;color:#262626;letter-spacing:-0.092px;">SmartArt</span>
<span class="t" style="left:453.4px;top:106.0px;font-size:12px;color:#262626;letter-spacing:-0.218px;">Graphique</span>
<span class="t" style="left:513.5px;top:106.0px;font-size:12px;color:#262626;letter-spacing:-0.151px;">Capture</span>
<span class="t" style="left:335.3px;top:141.0px;font-size:12px;color:#2e2e2e;letter-spacing:-0.042px;">Illustrations</span>
<span class="t" style="left:589.3px;top:80.0px;font-size:12px;color:#262626;letter-spacing:-0.189px;">Télécharger des compléments</span>
<span class="t" style="left:589.3px;top:111.0px;font-size:12px;color:#262626;letter-spacing:-0.005px;">Mes compléments</span>
<span class="t" style="left:653.6px;top:141.0px;font-size:12px;color:#2e2e2e;letter-spacing:-0.523px;">Compléments</span>
<span class="t" style="left:755.2px;top:106.0px;font-size:12px;color:#262626;letter-spacing:-0.079px;">Wikipédia</span>
<span class="t" style="left:767.2px;top:71.0px;font-size:27.5px;color:#151515;transform-origin:0 0;transform:scaleX(1.0705);font-family:'Liberation Serif',serif;-webkit-text-stroke:0.4px #151515;">W</span>
<span class="t" style="left:827.2px;top:106.0px;font-size:12px;color:#262626;letter-spacing:-0.246px;">Vidéo</span>
<span class="t" style="left:821.4px;top:122.0px;font-size:12px;color:#262626;letter-spacing:-0.035px;">en ligne</span>
<span class="t" style="left:826.5px;top:141.0px;font-size:12px;color:#2e2e2e;letter-spacing:-0.397px;">Média</span>
<span class="t" style="left:897.5px;top:72.0px;font-size:12px;color:#262626;letter-spacing:-0.562px;">Lien</span>
<span class="t" style="left:897.3px;top:95.0px;font-size:12px;color:#262626;letter-spacing:-0.306px;">Signet</span>
<span class="t" style="left:897.5px;top:118.0px;font-size:12px;color:#262626;letter-spacing:-0.392px;">Renvoi</span>
<span class="t" style="left:894.4px;top:141.0px;font-size:12px;color:#2e2e2e;letter-spacing:-0.922px;">Liens</span>
<span class="t" style="left:951.5px;top:106.0px;font-size:12px;color:#262626;letter-spacing:0.057px;">Commentaire</span>
<span class="t" style="left:951.5px;top:141.0px;font-size:12px;color:#2e2e2e;letter-spacing:-0.548px;">Commentaires</span>
<span class="t" style="left:1048.5px;top:106.0px;font-size:12px;color:#262626;letter-spacing:-0.994px;">En-</span>
<span class="t" style="left:1043.1px;top:122.0px;font-size:12px;color:#262626;letter-spacing:-0.039px;">tête</span>
<span class="t" style="left:1080.4px;top:106.0px;font-size:12px;color:#262626;letter-spacing:-0.351px;">Pied de</span>
<span class="t" style="left:1083.9px;top:122.0px;font-size:12px;color:#262626;letter-spacing:-0.534px;">page</span>
<span class="t" style="left:1127.3px;top:106.0px;font-size:12px;color:#262626;letter-spacing:0.122px;">Numéro</span>
<span class="t" style="left:1124.4px;top:122.0px;font-size:12px;color:#262626;letter-spacing:-0.282px;">de page</span>
<span class="t" style="left:1046.3px;top:141.0px;font-size:12px;color:#2e2e2e;letter-spacing:-0.208px;">En-tête et pied de page</span>
<span class="t" style="left:1188.0px;top:106.0px;font-size:12px;color:#262626;letter-spacing:-0.141px;">Zone de</span>
<span class="t" style="left:1193.2px;top:122.0px;font-size:12px;color:#262626;letter-spacing:-0.054px;">texte</span>
<span class="t" style="left:1256.2px;top:72.0px;font-size:12px;color:#262626;letter-spacing:-0.098px;">QuickPart</span>
<span class="t" style="left:1256.5px;top:95.0px;font-size:12px;color:#262626;letter-spacing:0.134px;">WordArt</span>
<span class="t" style="left:1256.7px;top:118.0px;font-size:12px;color:#b1b1b1;letter-spacing:-0.090px;">Lettrine</span>
<span class="t" style="left:1291.2px;top:141.0px;font-size:12px;color:#2e2e2e;letter-spacing:-0.847px;">Texte</span>
<span class="t" style="left:1345.2px;top:72.0px;font-size:12px;color:#262626;letter-spacing:-0.159px;">Signature</span>
<span class="t" style="left:1345.8px;top:95.0px;font-size:12px;color:#b1b1b1;letter-spacing:-0.277px;">Date et heure</span>
<span class="t" style="left:1345.8px;top:118.0px;font-size:12px;color:#262626;letter-spacing:-0.172px;">Objet</span>
<span class="t" style="left:1453.4px;top:72.0px;font-size:12px;color:#b1b1b1;letter-spacing:-0.211px;">Équation</span>
<span class="t" style="left:1453.4px;top:95.0px;font-size:12px;color:#b1b1b1;letter-spacing:-0.181px;">Symbole</span>
<span class="t" style="left:1451.5px;top:141.0px;font-size:12px;color:#2e2e2e;letter-spacing:-0.827px;">Symboles</span>
<span class="t" style="left:2.5px;top:762.0px;font-size:11px;color:#444;letter-spacing:-0.092px;">Page 10 sur 11</span>
<span class="t" style="left:95.3px;top:762.0px;font-size:11px;color:#444;letter-spacing:-0.021px;">810 mots</span>
<span class="t" style="left:1535.5px;top:762.0px;font-size:11px;color:#444;letter-spacing:-0.501px;">130 %</span>
<span class="t" style="left:386.6px;top:172.0px;font-size:24.7px;color:#2f5496;transform-origin:0 0;transform:scaleX(0.8984);font-family:'DejaVu Sans Light','DejaVu Sans',sans-serif;font-weight:200;-webkit-text-stroke:0.6px #2f5496;">Annexe 5 : pagination 1</span>
<span class="t" style="left:390.8px;top:236.9px;font-size:6.2px;color:#e8eef8;letter-spacing:-0.163px;">Fichier</span>
<span class="t" style="left:454.5px;top:236.9px;font-size:6.2px;color:#e8eef8;letter-spacing:-0.167px;">Insertion</span>
<span class="t" style="left:490.4px;top:236.9px;font-size:6.2px;color:#e8eef8;letter-spacing:-0.156px;">Création</span>
<span class="t" style="left:526.1px;top:236.9px;font-size:6.2px;color:#e8eef8;letter-spacing:-0.187px;">Mise en page</span>
<span class="t" style="left:574.8px;top:236.9px;font-size:6.2px;color:#e8eef8;letter-spacing:-0.384px;">Références</span>
<span class="t" style="left:616.7px;top:236.9px;font-size:6.2px;color:#e8eef8;letter-spacing:-0.162px;">Publipostage</span>
<span class="t" style="left:664.2px;top:236.9px;font-size:6.2px;color:#e8eef8;letter-spacing:-0.305px;">Révision</span>
<span class="t" style="left:699.0px;top:236.9px;font-size:6.2px;color:#e8eef8;letter-spacing:0.014px;">Affichage</span>
<span class="t" style="left:738.0px;top:236.9px;font-size:6.2px;color:#e8eef8;letter-spacing:-0.097px;">Aide</span>
<span class="t" style="left:763.3px;top:236.9px;font-size:6.2px;color:#e8eef8;letter-spacing:0.012px;">Acrobat</span>
<span class="t" style="left:806.7px;top:236.9px;font-size:6.2px;color:#e8eef8;letter-spacing:-0.157px;">Dites-nous ce que vous voulez faire</span>
<span class="t" style="left:1143.0px;top:236.9px;font-size:6.2px;color:#e8eef8;letter-spacing:-0.333px;">Partager</span>
<span class="t" style="left:421.4px;top:236.9px;font-size:6.2px;color:#3c66a6;letter-spacing:-0.042px;">Accueil</span>
<span class="t" style="left:723.8px;top:220.6px;font-size:6.2px;color:#7f99c6;letter-spacing:-0.085px;">accessibilite document word.docx  -  Word</span>
<span class="t" style="left:1045.6px;top:220.4px;font-size:6.2px;color:#3c66a6;letter-spacing:-0.012px;">Connexion</span>
<span class="t" style="left:390.0px;top:268.5px;font-size:6px;color:#3c3c3c;letter-spacing:-0.174px;">Coller</span>
<span class="t" style="left:418.9px;top:251.7px;font-size:6px;color:#3c3c3c;letter-spacing:-0.077px;">Couper</span>
<span class="t" style="left:418.9px;top:263.3px;font-size:6px;color:#3c3c3c;letter-spacing:-0.057px;">Copier</span>
<span class="t" style="left:418.9px;top:274.5px;font-size:6px;color:#3c3c3c;letter-spacing:-0.062px;">Reproduire la mise en forme</span>
<span class="t" style="left:419.8px;top:285.9px;font-size:6px;color:#555555;letter-spacing:-0.335px;">Presse-papiers</span>
<span class="t" style="left:502.0px;top:255.7px;font-size:6px;color:#3c3c3c;letter-spacing:0.034px;">Calibri Light</span>
<span class="t" style="left:545.4px;top:255.7px;font-size:6px;color:#3c3c3c;letter-spacing:-0.587px;">12</span>
<span class="t" style="left:504.0px;top:270.6px;font-size:6px;color:#3c3c3c;letter-spacing:-0.072px;font-weight:bold;">G</span>
<span class="t" style="left:515.7px;top:270.6px;font-size:6px;color:#3c3c3c;letter-spacing:-0.100px;font-family:'Liberation Serif',serif;font-style:italic;">I</span>
<span class="t" style="left:526.3px;top:270.6px;font-size:6px;color:#3c3c3c;letter-spacing:-0.316px;text-decoration:underline;">S</span>
<span class="t" style="left:541.0px;top:271.6px;font-size:5.5px;color:#3c3c3c;letter-spacing:-0.438px;text-decoration:line-through;">abc</span>
<span class="t" style="left:553.0px;top:270.6px;font-size:6px;color:#3c3c3c;letter-spacing:0.156px;font-weight:bold;">x</span>
<span class="t" style="left:564.0px;top:270.6px;font-size:6px;color:#3c3c3c;letter-spacing:0.156px;font-weight:bold;">x</span>
<span class="t" style="left:576.7px;top:256.0px;font-size:7px;color:#3c3c3c;letter-spacing:0.128px;">A</span>
<span class="t" style="left:587.7px;top:257.0px;font-size:6px;color:#3c3c3c;letter-spacing:-0.016px;">A</span>
<span class="t" style="left:601.4px;top:256.0px;font-size:6px;color:#3c3c3c;letter-spacing:0.056px;">Aa</span>
<span class="t" style="left:554.9px;top:285.9px;font-size:6px;color:#555555;letter-spacing:-0.389px;">Police</span>
<span class="t" style="left:671.3px;top:285.9px;font-size:6px;color:#555555;letter-spacing:-0.284px;">Paragraphe</span>
<span class="t" style="left:735.7px;top:256.0px;font-size:8px;color:#3c3c3c;letter-spacing:0.603px;">¶</span>
<span class="t" style="left:752.2px;top:258.5px;font-size:6px;color:#222;letter-spacing:-0.288px;font-weight:bold;">AaBbCcDc</span>
<span class="t" style="left:754.9px;top:270.6px;font-size:6px;color:#3c3c3c;letter-spacing:-0.005px;">¶ Normal</span>
<span class="t" style="left:788.1px;top:258.5px;font-size:6px;color:#333;letter-spacing:1.035px;">AaBbCcI</span>
<span class="t" style="left:788.1px;top:270.6px;font-size:6px;color:#3c3c3c;letter-spacing:-0.079px;">Sous-partie</span>
<span class="t" style="left:824.0px;top:258.5px;font-size:6px;color:#222;letter-spacing:-0.259px;font-weight:bold;">AaBbCcDc</span>
<span class="t" style="left:824.0px;top:270.6px;font-size:6px;color:#3c3c3c;letter-spacing:-0.215px;">¶ Sans int...</span>
<span class="t" style="left:859.6px;top:257.6px;font-size:9px;color:#5b82be;letter-spacing:-0.726px;">AaBbCc</span>
<span class="t" style="left:867.0px;top:270.6px;font-size:6px;color:#3c3c3c;letter-spacing:-0.297px;">Titre 1</span>
<span class="t" style="left:895.4px;top:257.5px;font-size:7px;color:#7d9fd1;letter-spacing:-0.239px;">AaBbCcC</span>
<span class="t" style="left:902.5px;top:270.6px;font-size:6px;color:#3c3c3c;letter-spacing:-0.147px;">Titre 2</span>
<span class="t" style="left:931.6px;top:253.4px;font-size:13.5px;color:#2a2a2a;letter-spacing:1.084px;">AaB</span>
<span class="t" style="left:940.6px;top:270.6px;font-size:6px;color:#3c3c3c;letter-spacing:-0.195px;">Titre</span>
<span class="t" style="left:967.2px;top:258.5px;font-size:6px;color:#6d7f9d;letter-spacing:0.559px;">AaBbCcC</span>
<span class="t" style="left:969.0px;top:270.6px;font-size:6px;color:#3c3c3c;letter-spacing:-0.043px;">Sous-titre</span>
<span class="t" style="left:867.5px;top:285.9px;font-size:6px;color:#555555;letter-spacing:-0.429px;">Styles</span>
<span class="t" style="left:1024.9px;top:251.7px;font-size:6px;color:#3c3c3c;letter-spacing:-0.191px;">Rechercher</span>
<span class="t" style="left:1024.9px;top:263.3px;font-size:6px;color:#3c3c3c;letter-spacing:-0.202px;">Remplacer</span>
<span class="t" style="left:1024.9px;top:274.5px;font-size:6px;color:#3c3c3c;letter-spacing:-0.069px;">Sélectionner</span>
<span class="t" style="left:1029.8px;top:285.9px;font-size:6px;color:#555555;letter-spacing:-0.060px;">Édition</span>
<span class="t" style="left:1070.3px;top:268.5px;font-size:6px;color:#3c3c3c;letter-spacing:-0.138px;">Créer et partager</span>
<span class="t" style="left:1073.2px;top:276.4px;font-size:6px;color:#3c3c3c;letter-spacing:-0.121px;">un PDF Adobe</span>
<span class="t" style="left:1121.1px;top:268.5px;font-size:6px;color:#3c3c3c;letter-spacing:-0.088px;">Demander</span>
<span class="t" style="left:1116.4px;top:276.4px;font-size:6px;color:#3c3c3c;letter-spacing:-0.164px;">des signatures</span>
<span class="t" style="left:1093.0px;top:285.9px;font-size:6px;color:#555555;letter-spacing:-0.123px;">Adobe Acrobat</span>
<span class="t" style="left:596.6px;top:319.8px;font-size:9.8px;color:#3d3d3d;letter-spacing:-0.172px;-webkit-text-stroke:0.08px;">1.</span>
<span class="t" style="left:611.4px;top:319.8px;font-size:9.8px;color:#3d3d3d;letter-spacing:0.615px;-webkit-text-stroke:0.08px;">Choix de la police</span>
<span class="t" style="left:596.6px;top:338.7px;font-size:9.8px;color:#3d3d3d;letter-spacing:-0.172px;-webkit-text-stroke:0.08px;">2.</span>
<span class="t" style="left:611.4px;top:338.7px;font-size:9.8px;color:#3d3d3d;letter-spacing:0.701px;-webkit-text-stroke:0.08px;">Interlignage et espacement</span>
<span class="t" style="left:596.6px;top:357.4px;font-size:9.8px;color:#3d3d3d;letter-spacing:-0.172px;-webkit-text-stroke:0.08px;">3.</span>
<span class="t" style="left:611.4px;top:357.4px;font-size:9.8px;color:#3d3d3d;letter-spacing:0.597px;-webkit-text-stroke:0.08px;">Mise en page</span>
<span class="t" style="left:596.6px;top:376.3px;font-size:9.8px;color:#3d3d3d;letter-spacing:-0.172px;-webkit-text-stroke:0.08px;">4.</span>
<span class="t" style="left:611.4px;top:376.3px;font-size:9.8px;color:#3d3d3d;letter-spacing:0.578px;-webkit-text-stroke:0.08px;">Sommaire</span>
<span class="t" style="left:627.4px;top:395.4px;font-size:9.8px;color:#3d3d3d;letter-spacing:-0.172px;-webkit-text-stroke:0.08px;">a.</span>
<span class="t" style="left:642.9px;top:395.4px;font-size:9.8px;color:#3d3d3d;letter-spacing:0.650px;-webkit-text-stroke:0.08px;">Annexe 1 : interlignage et espacement</span>
<span class="t" style="left:627.4px;top:414.4px;font-size:9.8px;color:#3d3d3d;letter-spacing:-0.172px;-webkit-text-stroke:0.08px;">b.</span>
<span class="t" style="left:642.9px;top:414.4px;font-size:9.8px;color:#3d3d3d;letter-spacing:0.514px;-webkit-text-stroke:0.08px;">Annexe 2 : mise en page 1</span>
<span class="t" style="left:627.4px;top:433.3px;font-size:9.8px;color:#3d3d3d;letter-spacing:0.375px;-webkit-text-stroke:0.08px;">c.</span>
<span class="t" style="left:642.9px;top:433.3px;font-size:9.8px;color:#3d3d3d;letter-spacing:0.514px;-webkit-text-stroke:0.08px;">Annexe 3 : mise en page 2</span>
<span class="t" style="left:580.9px;top:550.2px;font-size:13.3px;color:#5377b0;letter-spacing:-0.482px;">1. Choix de la police</span>
<span class="t" style="left:580.9px;top:577.9px;font-size:9.8px;color:#3d3d3d;letter-spacing:0.586px;-webkit-text-stroke:0.08px;">En typographie, il existe deux types de polices, avec ou sans empattement. Les</span>
<span class="t" style="left:580.9px;top:596.8px;font-size:9.8px;color:#3d3d3d;letter-spacing:0.593px;word-spacing:3px;-webkit-text-stroke:0.08px;">empattements sont les petites extensions qui terminent les extrémités des</span>
<span class="t" style="left:1435.0px;top:65.0px;font-size:22.5px;color:#b9b9b9;transform-origin:0 0;transform:scaleX(1.0084);font-family:'Liberation Serif',serif;font-weight:bold;font-style:italic;">π</span>
<span class="t" style="left:1435.4px;top:90.6px;font-size:18.5px;color:#b9b9b9;transform-origin:0 0;transform:scaleX(0.9172);font-family:'Liberation Serif',serif;font-weight:bold;">Ω</span></div>
</body>
</html>
